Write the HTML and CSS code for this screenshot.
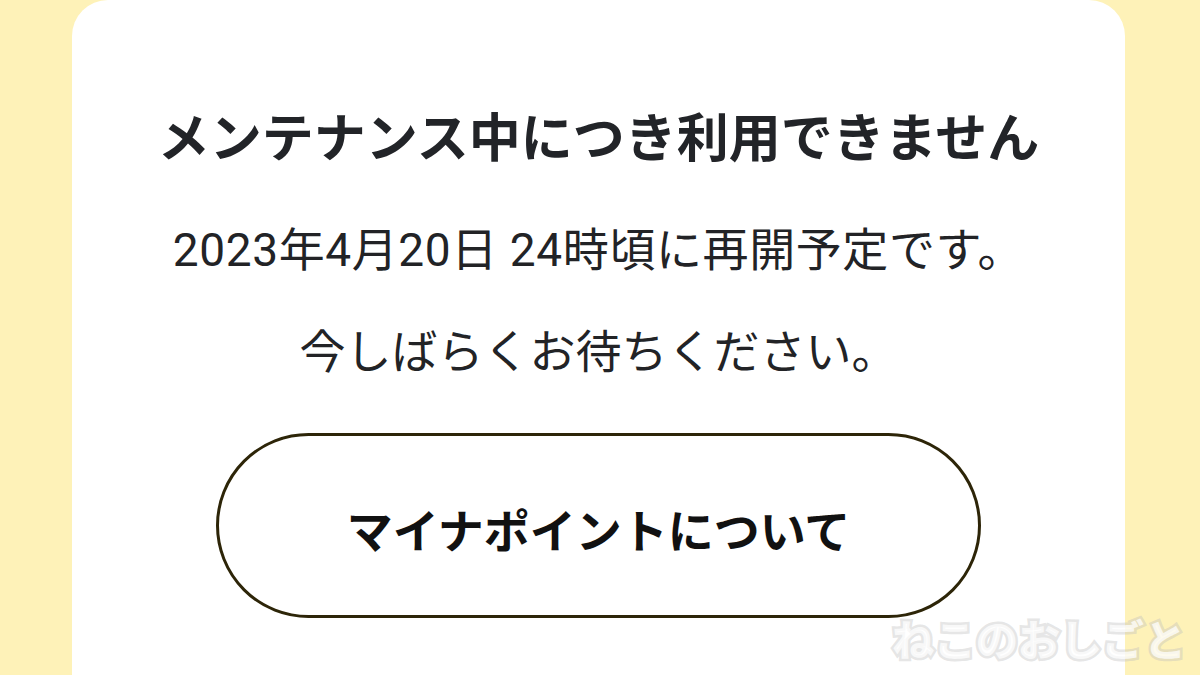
FILE: index.html
```html
<!DOCTYPE html>
<html lang="ja">
<head>
<meta charset="UTF-8">
<title>メンテナンス中</title>
<link rel="stylesheet" href="styles.css">
</head>
<body>

<div class="page">
  <div class="card">
    <h1 class="title">メンテナンス中につき利用できません</h1>
    <p class="message">2023年4月20日 24時頃に再開予定です。</p>
    <p class="message wait">今しばらくお待ちください。</p>
    <a class="button" href="#">マイナポイントについて</a>
  </div>
</div>

<div class="watermark">ねこのおしごと</div>

</body>
</html>
```

FILE: styles.css
```css
/* Page background */
body {
  margin: 0;
  background-color: #fef2b8;
  font-family: Roboto, "Noto Sans CJK JP", sans-serif;
  color: #222326;
  height: 675px;
  overflow: hidden;
  position: relative;
}

.page {
  padding: 0 75px 0 72px;
}

/* The white card */
.card {
  background-color: #ffffff;
  border-radius: 36px 36px 0 0;
  height: 675px;
  display: flex;
  flex-direction: column;
  align-items: center;
  padding-top: 104px;
  box-sizing: border-box;
}

.title {
  margin: 0;
  font-family: "Noto Sans CJK JP", sans-serif;
  font-size: 52px;
  font-weight: 700;
  line-height: 61px;
  color: #222428;
}

.message {
  margin: 58px 0 0 0;
  font-size: 46px;
  line-height: 54px;
  font-weight: 400;
  letter-spacing: 0.6px;
}

.message.wait {
  margin-top: 48px;
  letter-spacing: 0;
}

/* Pill button */
.button {
  margin-top: 54px;
  width: 765px;
  height: 185px;
  flex-shrink: 0;
  box-sizing: border-box;
  border: 3px solid #2d2508;
  border-radius: 93px;
  display: flex;
  align-items: center;
  justify-content: center;
  text-decoration: none;
  color: #111111;
  font-family: "Noto Sans CJK JP", sans-serif;
  font-size: 46px;
  font-weight: 700;
  padding-top: 4px;
}

/* Watermark over the bottom right */
.watermark {
  position: absolute;
  right: 14px;
  bottom: 12px;
  font-family: "Noto Sans CJK JP", sans-serif;
  font-size: 42px;
  font-weight: 900;
  color: rgba(255, 255, 255, 0.75);
  -webkit-text-stroke: 5px rgba(190, 190, 190, 0.4);
  paint-order: stroke fill;
  line-height: 50px;
}
```
